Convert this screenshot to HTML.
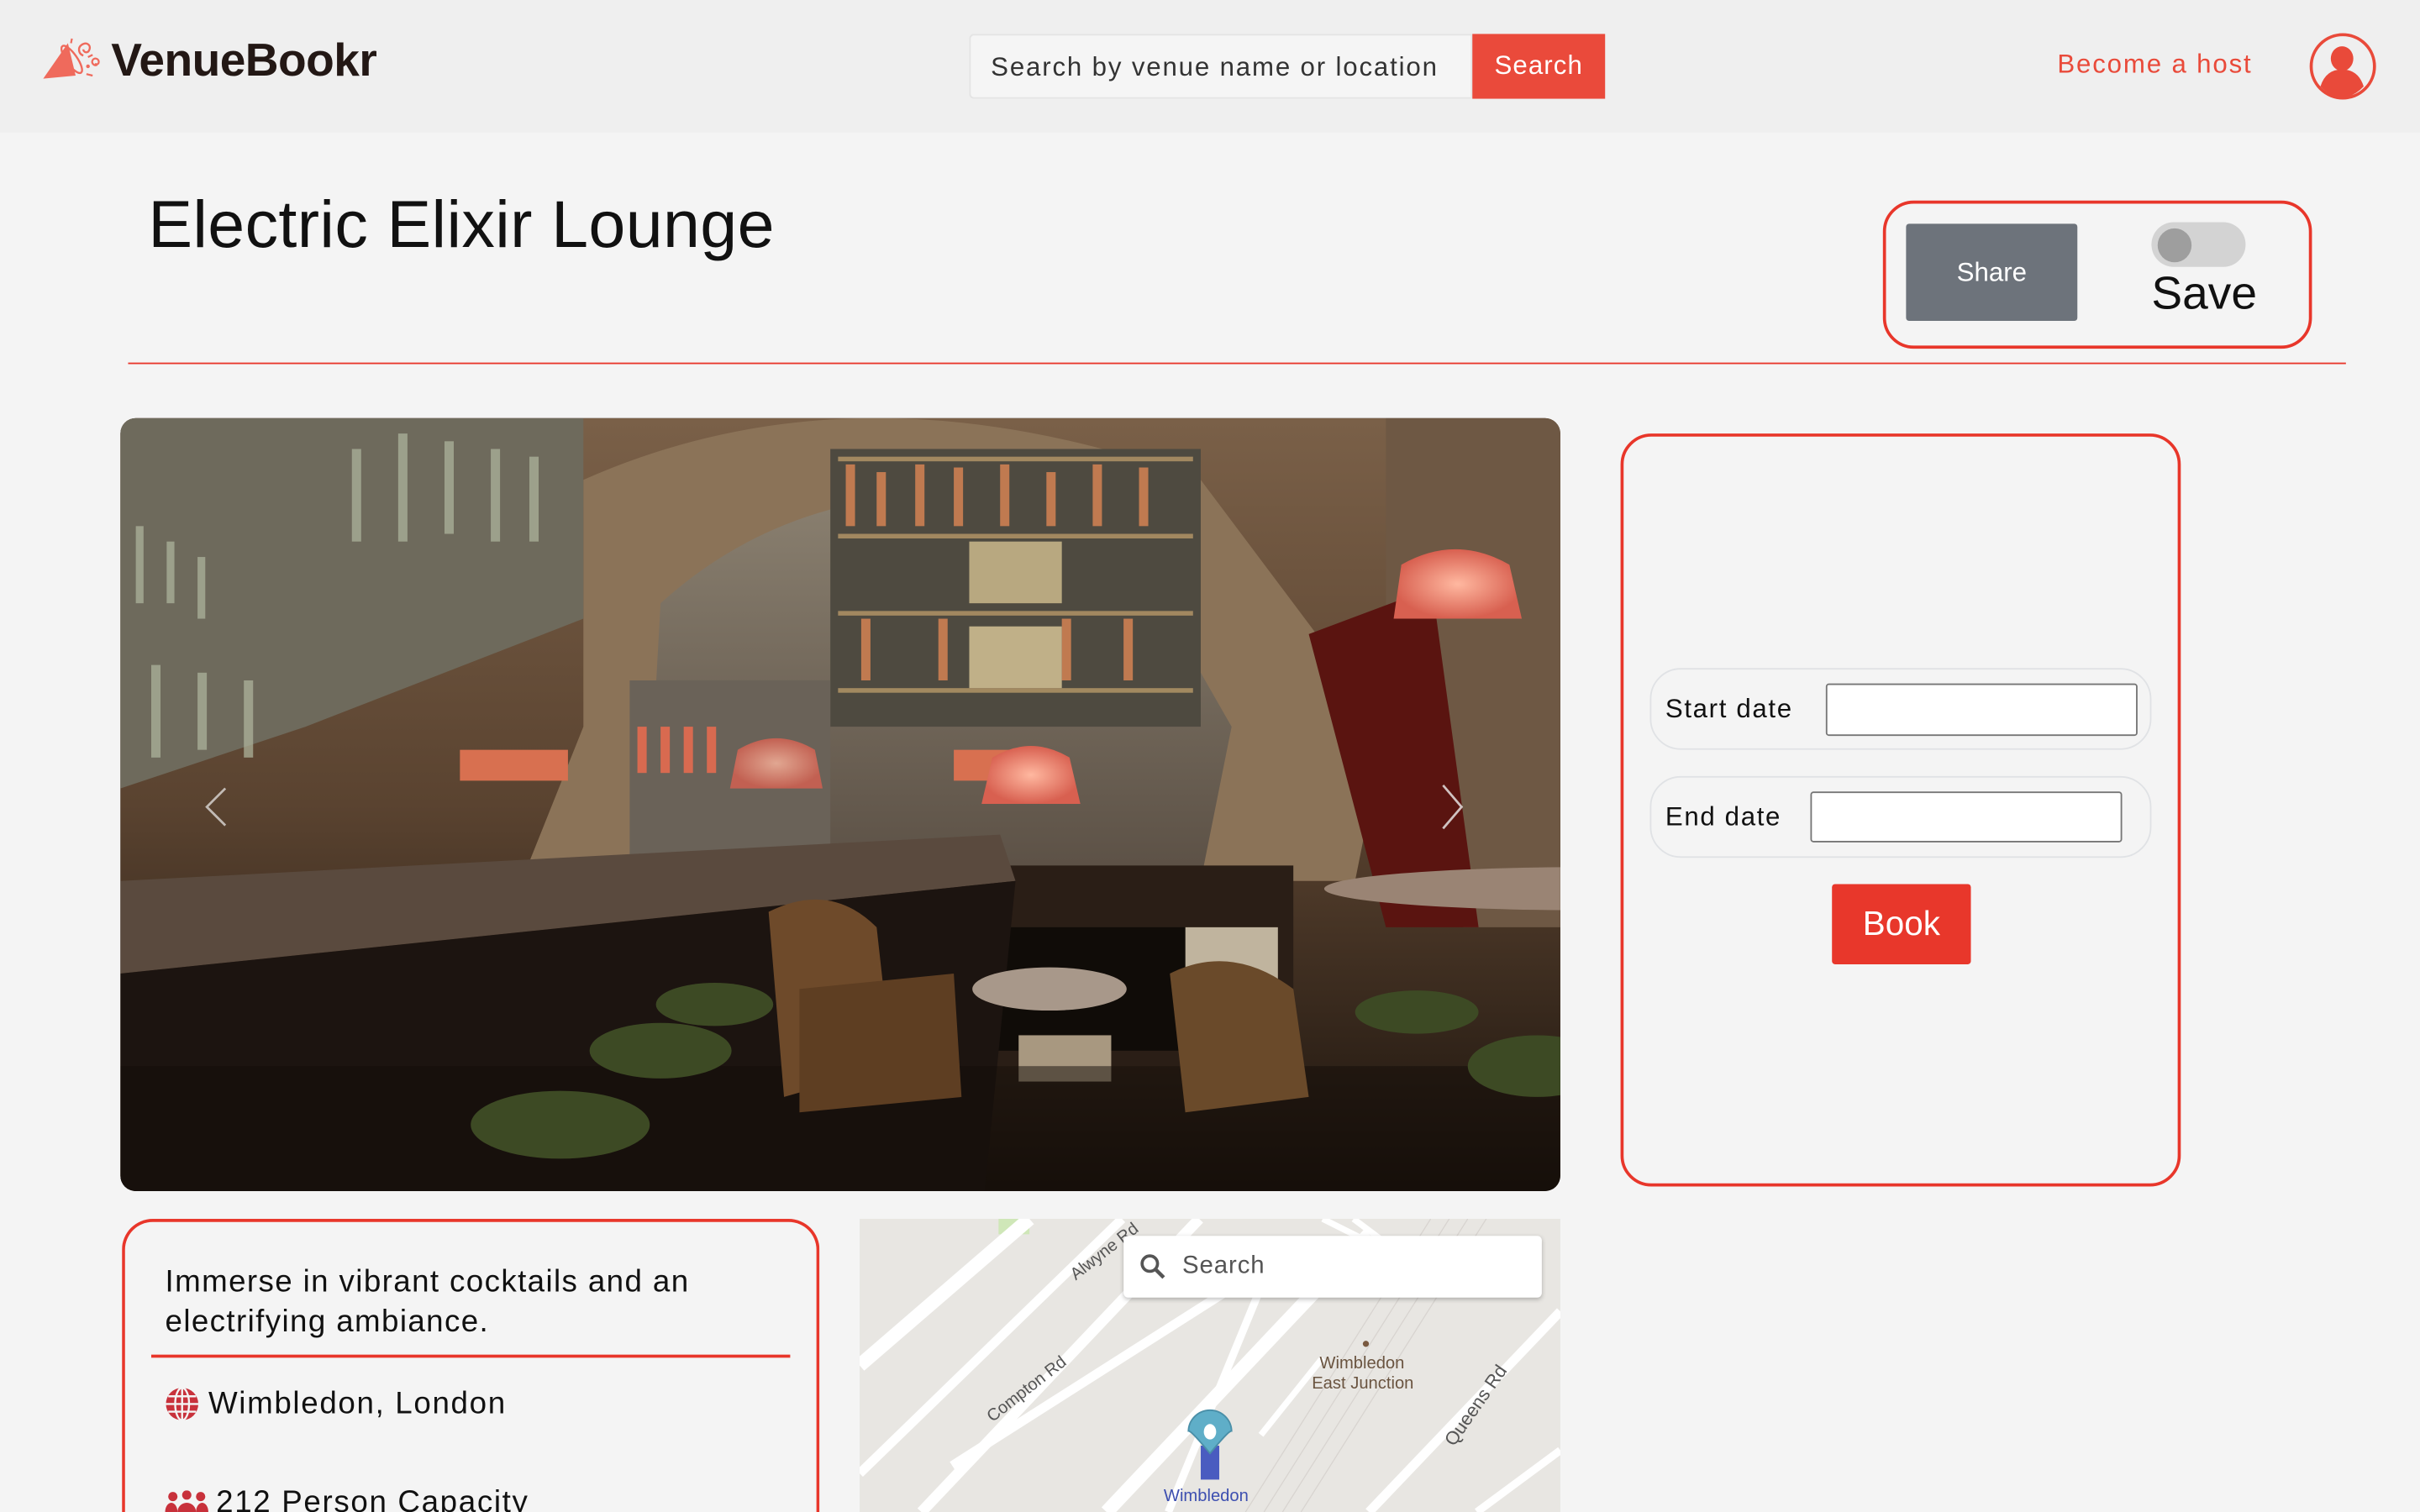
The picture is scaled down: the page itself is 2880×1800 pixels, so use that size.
<!DOCTYPE html>
<html><head><meta charset="utf-8">
<style>
*{box-sizing:border-box;margin:0;padding:0}
html,body{width:2880px;height:1800px;overflow:hidden;background:#f4f4f4}
#w{position:absolute;left:0;top:0;width:1568px;height:980px;overflow:hidden;transform:scale(1.836735);transform-origin:0 0;font-family:"Liberation Sans","DejaVu Sans",sans-serif;color:#111}
.a{position:absolute}
</style></head><body><div id="w">
<div class="a" style="left:0;top:0;width:1568px;height:86px;background:#efefef"></div>
<svg class="a" style="left:26px;top:22px" width="42" height="34" viewBox="0 0 42 34">
<path d="M18 6 L2 29 L23 27 Z" fill="#ef6a5c"/>
<ellipse cx="20.5" cy="16.5" rx="3.5" ry="10.5" transform="rotate(-35 20.5 16.5)" fill="none" stroke="#ef6a5c" stroke-width="1.3"/>
<path d="M28 14c-3-1-4-5-1-7s6 0 5 3-4 2-4 0" fill="none" stroke="#ef6a5c" stroke-width="1.3"/>
<path d="M37 20c-2 1-4-1-3-3s4-1 4 1-2 2-2 1" fill="none" stroke="#ef6a5c" stroke-width="1.2"/>
<path d="M20 6l.6-3M31 15l3-1.5M30 26l4 1" stroke="#ef6a5c" stroke-width="1.2"/>
<circle cx="31" cy="21" r="1.2" fill="#ef6a5c"/>
</svg>
<div class="a" style="left:72px;top:23px;font-size:30px;font-weight:bold;color:#231815;letter-spacing:-0.3px">VenueBookr</div>
<div class="a" style="left:628px;top:22px;width:326px;height:42px;background:#f5f5f5;border:1px solid #e4e4e4;border-radius:3px 0 0 3px;font-size:17px;color:#333;padding:11px 0 0 13px;letter-spacing:1px">Search by venue name or location</div>
<div class="a" style="left:954px;top:22px;width:86px;height:42px;background:#ea4a3b;color:#fff;font-size:17px;text-align:center;line-height:42px;letter-spacing:.6px">Search</div>
<div class="a" style="left:1333px;top:32px;font-size:17px;color:#e94a3a;letter-spacing:1px">Become a host</div>
<svg class="a" style="left:1495px;top:20px" width="46" height="46" viewBox="0 0 46 46">
<circle cx="23" cy="23" r="20.5" fill="none" stroke="#e94a3a" stroke-width="2"/>
<ellipse cx="22.5" cy="18" rx="7.3" ry="8" fill="#e94a3a"/>
<path d="M8.5 36 Q12 25 22.5 25 Q33 25 36.5 36 Q30 43 22.5 43 Q15 43 8.5 36Z" fill="#e94a3a"/>
</svg>
<div class="a" style="left:96px;top:122px;font-size:43px;color:#111;letter-spacing:.2px">Electric Elixir Lounge</div>
<div class="a" style="left:1220px;top:130px;width:278px;height:96px;border:2px solid #e8362a;border-radius:20px"></div>
<div class="a" style="left:1235px;top:145px;width:111px;height:63px;background:#6d737b;border-radius:2px;color:#fff;font-size:17px;text-align:center;line-height:63px">Share</div>
<div class="a" style="left:1394px;top:144px;width:61px;height:29px;background:#d3d3d3;border-radius:15px"></div>
<div class="a" style="left:1398px;top:148px;width:22px;height:22px;background:#9e9e9e;border-radius:50%"></div>
<div class="a" style="left:1394px;top:174px;font-size:30px;color:#111">Save</div>
<div class="a" style="left:83px;top:235px;width:1437px;height:1px;background:#e8362a"></div>

<div class="a" style="left:78px;top:271px;width:933px;height:501px;border-radius:10px;overflow:hidden;background:#3a2a1c">
<svg width="933" height="501" viewBox="0 0 933 501" preserveAspectRatio="none">
<defs>
<linearGradient id="g1" x1="0" y1="0" x2="0" y2="1"><stop offset="0" stop-color="#7a6048"/><stop offset=".5" stop-color="#5a4330"/><stop offset="1" stop-color="#1a120c"/></linearGradient>
<linearGradient id="g2" x1="0" y1="0" x2="0" y2="1"><stop offset="0" stop-color="#8a8070"/><stop offset="1" stop-color="#5b5045"/></linearGradient>
<radialGradient id="lamp"><stop offset="0" stop-color="#ffb8a0"/><stop offset="1" stop-color="#d86050"/></radialGradient>
</defs>
<rect width="933" height="501" fill="url(#g1)"/>
<path d="M300 40 Q480 -40 700 40 L820 200 L800 300 L260 300 L300 200Z" fill="#8b7358"/>
<path d="M350 120 Q460 20 640 60 L720 200 L700 300 L340 300Z" fill="url(#g2)"/>
<rect x="460" y="20" width="240" height="180" fill="#4e4a40"/>
<g fill="#b89868" opacity=".8">
<rect x="465" y="25" width="230" height="3"/><rect x="465" y="75" width="230" height="3"/><rect x="465" y="125" width="230" height="3"/><rect x="465" y="175" width="230" height="3"/>
</g>
<g fill="#c07a50"><rect x="470" y="30" width="6" height="40"/><rect x="490" y="35" width="6" height="35"/><rect x="515" y="30" width="6" height="40"/><rect x="540" y="32" width="6" height="38"/><rect x="570" y="30" width="6" height="40"/><rect x="600" y="35" width="6" height="35"/><rect x="630" y="30" width="6" height="40"/><rect x="660" y="32" width="6" height="38"/><rect x="480" y="130" width="6" height="40"/><rect x="530" y="130" width="6" height="40"/><rect x="610" y="130" width="6" height="40"/><rect x="650" y="130" width="6" height="40"/></g>
<rect x="550" y="80" width="60" height="40" fill="#b8a880"/><rect x="550" y="135" width="60" height="40" fill="#c0b088"/>
<rect x="330" y="170" width="130" height="120" fill="#6a6258"/>
<g fill="#d86a50"><rect x="335" y="200" width="6" height="30"/><rect x="350" y="200" width="6" height="30"/><rect x="365" y="200" width="6" height="30"/><rect x="380" y="200" width="6" height="30"/></g>
<g fill="#d87050"><rect x="220" y="215" width="70" height="20"/><rect x="540" y="215" width="60" height="20"/></g>
<path d="M0 0 L300 0 L300 130 L120 200 L0 240Z" fill="#6e6a5c"/>
<g fill="#b0b8a0" opacity=".7"><rect x="10" y="70" width="5" height="50"/><rect x="30" y="80" width="5" height="40"/><rect x="50" y="90" width="5" height="40"/><rect x="150" y="20" width="6" height="60"/><rect x="180" y="10" width="6" height="70"/><rect x="210" y="15" width="6" height="60"/><rect x="240" y="20" width="6" height="60"/><rect x="265" y="25" width="6" height="55"/><rect x="20" y="160" width="6" height="60"/><rect x="50" y="165" width="6" height="50"/><rect x="80" y="170" width="6" height="50"/></g>
<path d="M820 0 L933 0 L933 330 L870 330 L820 200Z" fill="#6e5844"/>
<path d="M770 140 L850 110 L880 330 L820 330Z" fill="#5a1410"/>
<path d="M440 290 L760 290 L760 420 L440 420Z" fill="#2a1e16"/>
<rect x="480" y="330" width="70" height="90" fill="#c8bca8"/>
<rect x="690" y="330" width="60" height="90" fill="#c0b49e"/>
<rect x="550" y="330" width="140" height="80" fill="#100c08"/>
<rect x="582" y="400" width="60" height="30" fill="#a89880"/>
<path d="M0 300 L570 270 L580 300 L0 360Z" fill="#5a4a3e"/>
<path d="M0 360 L580 300 L560 501 L0 501Z" fill="#1c1410"/>
<rect x="0" y="420" width="933" height="81" fill="#120c08" opacity=".5"/>
<g fill="#3d4a24"><ellipse cx="285" cy="458" rx="58" ry="22"/><ellipse cx="350" cy="410" rx="46" ry="18"/><ellipse cx="385" cy="380" rx="38" ry="14"/><ellipse cx="918" cy="420" rx="45" ry="20"/><ellipse cx="840" cy="385" rx="40" ry="14"/></g>
<path d="M420 320 Q460 300 490 330 L500 420 L430 440Z" fill="#6e4a2a"/>
<path d="M440 370 L540 360 L545 440 L440 450Z" fill="#5e3e22"/>
<path d="M680 360 Q720 340 760 370 L770 440 L690 450Z" fill="#6a4a2a"/>
<ellipse cx="602" cy="370" rx="50" ry="14" fill="#a8988a"/>
<ellipse cx="950" cy="305" rx="170" ry="14" fill="#9a8474"/>
<path d="M565 220 Q590 205 615 220 L622 250 L558 250Z" fill="url(#lamp)"/>
<path d="M830 95 Q865 75 900 95 L908 130 L825 130Z" fill="url(#lamp)"/>
<path d="M400 215 Q425 200 450 215 L455 240 L395 240Z" fill="url(#lamp)" opacity=".8"/>
<path d="M68 240 l-12 12 12 12" fill="none" stroke="#eee" stroke-width="1.5" opacity=".7"/>
<path d="M857 238 l12 14 -12 14" fill="none" stroke="#eee" stroke-width="1.5" opacity=".8"/>
</svg>
</div>

<div class="a" style="left:1050px;top:281px;width:363px;height:488px;border:2px solid #e8362a;border-radius:20px"></div>
<div class="a" style="left:1069px;top:433px;width:325px;height:53px;border:1px solid #e0e2e5;border-radius:20px"></div>
<div class="a" style="left:1079px;top:450px;font-size:17px;color:#111;letter-spacing:.9px">Start date</div>
<div class="a" style="left:1183px;top:443px;width:202px;height:34px;background:#fff;border:1px solid #767676;border-radius:2px"></div>
<div class="a" style="left:1069px;top:503px;width:325px;height:53px;border:1px solid #e0e2e5;border-radius:20px"></div>
<div class="a" style="left:1079px;top:520px;font-size:17px;color:#111;letter-spacing:.9px">End date</div>
<div class="a" style="left:1173px;top:513px;width:202px;height:33px;background:#fff;border:1px solid #767676;border-radius:2px"></div>
<div class="a" style="left:1187px;top:573px;width:90px;height:52px;background:#e8372b;border-radius:2px;color:#fff;font-size:22px;text-align:center;line-height:52px">Book</div>

<div class="a" style="left:79px;top:790px;width:452px;height:190px;border:2px solid #e8362a;border-bottom:none;border-radius:20px 20px 0 0"></div>
<div class="a" style="left:107px;top:818px;font-size:20px;line-height:26px;color:#111;width:420px;letter-spacing:.75px">Immerse in vibrant cocktails and an electrifying ambiance.</div>
<div class="a" style="left:98px;top:878px;width:414px;height:2px;background:#e8362a"></div>
<svg class="a" style="left:107px;top:899px" width="22" height="22" viewBox="0 0 22 22"><circle cx="11" cy="11" r="10.5" fill="#c8313b"/><g stroke="#f4f4f4" stroke-width="1.3" fill="none"><ellipse cx="11" cy="11" rx="4.5" ry="10.5"/><path d="M11 .5v21M.5 11h21M2 6h18M2 16h18"/></g></svg>
<div class="a" style="left:135px;top:899px;font-size:20px;color:#111;letter-spacing:.9px">Wimbledon, London</div>
<svg class="a" style="left:107px;top:966px" width="28" height="14" viewBox="0 0 28 14"><g fill="#c8313b"><circle cx="5" cy="4" r="3"/><circle cx="14" cy="3" r="3"/><circle cx="23" cy="4" r="3"/><ellipse cx="14" cy="14" rx="6" ry="6"/><ellipse cx="4" cy="14" rx="4" ry="6"/><ellipse cx="24" cy="14" rx="4" ry="6"/></g></svg>
<div class="a" style="left:140px;top:962px;height:18px;overflow:hidden;font-size:20px;line-height:24px;color:#111;letter-spacing:.9px">212 Person Capacity</div>

<div class="a" style="left:557px;top:790px;width:454px;height:190px;background:#e8e6e2;overflow:hidden">
<svg width="454" height="190" viewBox="0 0 454 190">
<rect x="90" y="0" width="20" height="10" fill="#cfe7b8"/>
<g stroke="#fff" fill="none">
<path d="M0 95 L110 0" stroke-width="9"/>
<path d="M0 165 L170 0" stroke-width="6"/>
<path d="M40 190 L220 0" stroke-width="7"/>
<path d="M60 160 L280 20" stroke-width="6"/>
<path d="M160 190 L330 10" stroke-width="9"/>
<path d="M200 190 L270 20" stroke-width="5"/>
<path d="M330 190 L454 60" stroke-width="6"/>
<path d="M260 140 L300 90" stroke-width="4"/>
<path d="M400 190 L454 150" stroke-width="5"/>
<path d="M300 0 L340 20 M320 0 L360 30" stroke-width="4"/>
</g>
<g stroke="#d8d4d0" stroke-width=".7" fill="none"><path d="M250 190 L370 0M262 190 L382 0M274 190 L394 0M286 190 L406 0"/></g>
<text x="140" y="40" transform="rotate(-38 140 40)" font-size="11" fill="#555" font-family="Liberation Sans,sans-serif">Alwyne Rd</text>
<text x="86" y="132" transform="rotate(-38 86 132)" font-size="11" fill="#555" font-family="Liberation Sans,sans-serif">Compton Rd</text>
<text x="385" y="148" transform="rotate(-55 385 148)" font-size="12" fill="#555" font-family="Liberation Sans,sans-serif">Queens Rd</text>
<circle cx="328" cy="81" r="2" fill="#7a5a40"/>
<text x="298" y="97" font-size="11" fill="#6a5440" font-family="Liberation Sans,sans-serif">Wimbledon</text>
<text x="293" y="110" font-size="11" fill="#6a5440" font-family="Liberation Sans,sans-serif">East Junction</text>
<rect x="221" y="147" width="12" height="22" fill="#4a5cc0"/>
<path d="M227 152 Q213 135 213 138 A14 14 0 1 1 241 138 Q241 135 227 152Z" fill="#5faec8" stroke="#4a8fa8" stroke-width="1"/>
<ellipse cx="227" cy="138" rx="4" ry="5" fill="#fff"/>
<text x="197" y="183" font-size="11" fill="#3d4fb0" font-family="Liberation Sans,sans-serif">Wimbledon</text>
</svg>
<div class="a" style="left:171px;top:11px;width:271px;height:40px;background:#fff;border-radius:3px;box-shadow:0 1px 3px rgba(0,0,0,.25)">
<svg class="a" style="left:10px;top:11px" width="18" height="18" viewBox="0 0 18 18"><circle cx="7" cy="7" r="5" fill="none" stroke="#555" stroke-width="2"/><path d="M11 11l5 5" stroke="#555" stroke-width="2.4"/></svg>
<div class="a" style="left:38px;top:11px;font-size:16px;color:#555;letter-spacing:.5px">Search</div>
</div>
</div>
</div></body></html>
